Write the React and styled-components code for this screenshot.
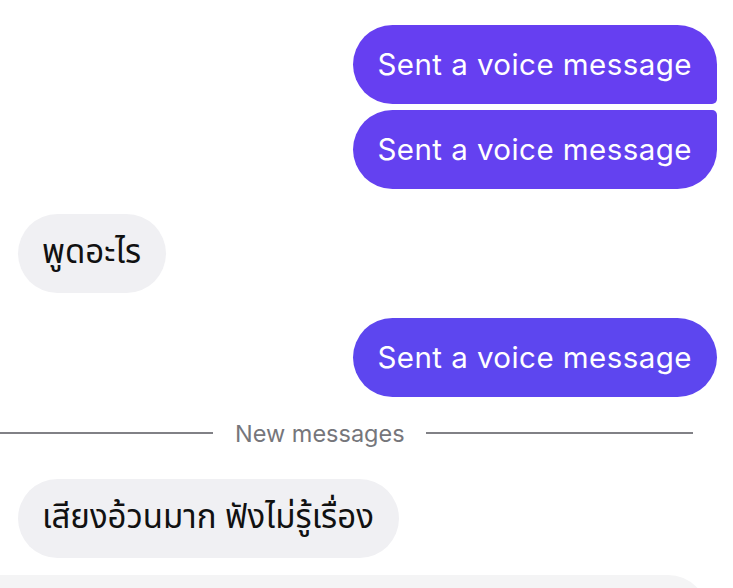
import React from 'react'
import styled, { createGlobalStyle } from 'styled-components';

const GlobalStyle = createGlobalStyle`
    html, body {
        margin: 0;
        padding: 0;
        background: #ffffff;
        overflow: hidden;
    }
`

const Thread = styled.div`
    width: 733px;
    height: 588px;
    overflow: hidden;
    display: flex;
    flex-direction: column;
    padding-top: 25px;
    box-sizing: border-box;
    font-family: Inter, "Noto Sans", "Noto Sans Thai", sans-serif;
`

const Row = styled.div`
    display: flex;
    justify-content: ${(p) => (p.$mine ? 'flex-end' : 'flex-start')};
    padding: 0 16px 0 18px;
    margin-top: ${(p) => p.$gap || 0}px;
`

const Bubble = styled.div`
    box-sizing: border-box;
    height: 79px;
    display: flex;
    align-items: center;
    padding: 0 25px 0 24px;
    font-size: 29.5px;
    letter-spacing: 0.45px;
    line-height: 35px;
    white-space: nowrap;
    border-radius: ${(p) => p.$radius || '40px'};
    background: ${(p) => (p.$mine ? p.$tint || '#663ff1' : '#f0f0f3')};
    color: ${(p) => (p.$mine ? '#ffffff' : '#111111')};
`

const ThaiText = styled.span`
    font-family: "Noto Sans Thai", "Noto Sans Thai Looped", Thonburi, "DejaVu Sans", sans-serif;
    font-size: 33px;
    letter-spacing: 0;
`

const Divider = styled.div`
    display: flex;
    align-items: center;
    margin-top: 24px;
    height: 24px;
    font-size: 23.5px;
    color: #76767b;
    &::before, &::after {
        content: '';
        height: 2px;
        background: #818186;
    }
    &::before {
        width: 213px;
        margin-right: 22px;
    }
    &::after {
        width: 267px;
        margin-left: 21px;
    }
`

const Composer = styled.div`
    margin-top: 17px;
    width: 708px;
    height: 60px;
    flex-shrink: 0;
    background: #f4f4f5;
    border-top-right-radius: 40px;
`

function App() {
    return (
        <>
            <GlobalStyle />
            <Thread>
                <Row $mine>
                    <Bubble $mine $radius="40px 40px 5px 40px">Sent a voice message</Bubble>
                </Row>
                <Row $mine $gap={6}>
                    <Bubble $mine $radius="40px 5px 40px 40px" $tint="#6441f0">Sent a voice message</Bubble>
                </Row>
                <Row $gap={25}>
                    <Bubble><ThaiText>พูดอะไร</ThaiText></Bubble>
                </Row>
                <Row $mine $gap={25}>
                    <Bubble $mine $tint="#5d46ef">Sent a voice message</Bubble>
                </Row>
                <Divider>New messages</Divider>
                <Row $gap={34}>
                    <Bubble><ThaiText>เสียงอ้วนมาก ฟังไม่รู้เรื่อง</ThaiText></Bubble>
                </Row>
                <Composer />
            </Thread>
        </>
    )
}

export default App
